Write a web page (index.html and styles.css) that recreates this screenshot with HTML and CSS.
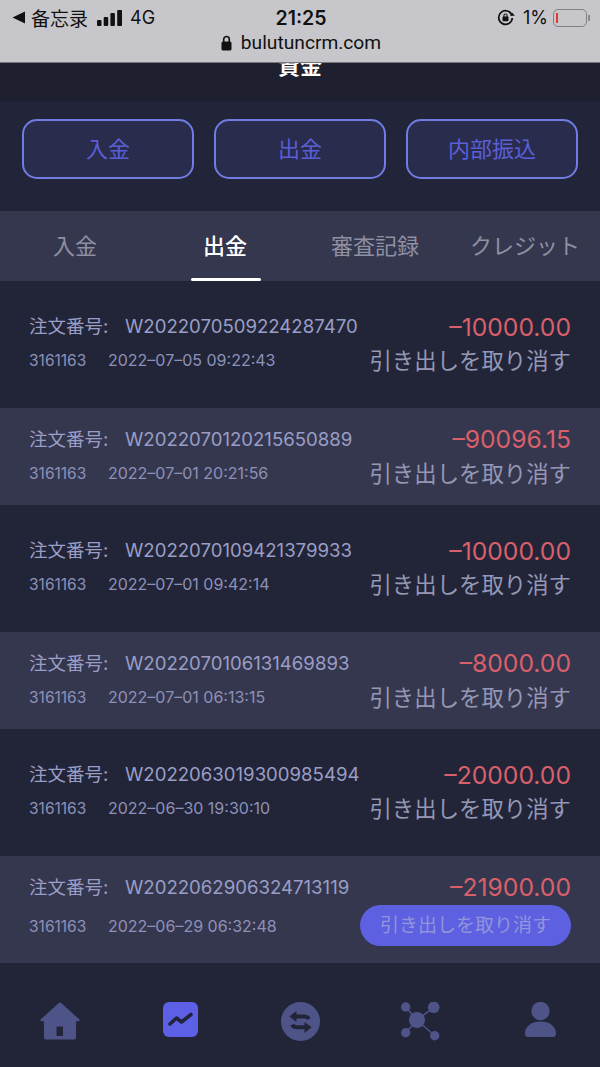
FILE: index.html

```html
<!DOCTYPE html>
<html lang="ja">
<head>
    <meta charset="UTF-8">
    <meta name="viewport" content="width=device-width, initial-scale=1.0">
    <title>資金</title>
    <link rel="stylesheet" href="styles.css">
</head>
<body>
    <div class="browser-bar">
        <div class="status">
            <div class="status-left">
                <svg class="back-arrow" width="13" height="13" viewBox="0 0 13 13"><path d="M13 0.500v12L0.500 6.500z" fill="#111"/></svg>
                <span class="app-name">备忘录</span>
                <svg class="signal" width="25" height="16" viewBox="0 0 25 16">
                    <rect x="0" y="10" width="4.500" height="6" rx="1"/>
                    <rect x="6.700" y="7" width="4.500" height="9" rx="1"/>
                    <rect x="13.400" y="3" width="4.500" height="13" rx="1"/>
                    <rect x="20.200" y="0" width="4.800" height="16" rx="1"/>
                </svg>
                <span class="network">4G</span>
            </div>
            <div class="clock">21:25</div>
            <div class="status-right">
                <svg class="rotate-lock" width="18" height="17" viewBox="0 0 18 17">
                    <path d="M15 6.500A6.800 6.800 0 1 0 15.300 9" fill="none" stroke="#111" stroke-width="1.700"/>
                    <path d="M13 6.800h4.800l-2.400-3z" fill="#111"/>
                    <rect x="5.500" y="7.600" width="6" height="4.600" rx="1" fill="#111"/>
                    <path d="M6.900 8V6.600a1.600 1.600 0 0 1 3.200 0V8" fill="none" stroke="#111" stroke-width="1.100"/>
                </svg>
                <span class="percent">1%</span>
                <div class="battery"><div class="battery-level"></div></div>
                <div class="battery-tip"></div>
            </div>
        </div>
        <div class="url">
            <svg width="11" height="16" viewBox="0 0 11 16">
                <rect x="0.500" y="6.500" width="10" height="9" rx="1.500" fill="#111"/>
                <path d="M2.700 7V4.300a2.800 2.800 0 0 1 5.600 0V7" fill="none" stroke="#111" stroke-width="1.600"/>
            </svg>
            <span>bulutuncrm.com</span>
        </div>
    </div>

    <header class="page-title">
        <h1>資金</h1>
    </header>

    <section class="actions">
        <button class="action-btn">入金</button>
        <button class="action-btn">出金</button>
        <button class="action-btn">内部振込</button>
    </section>

    <nav class="tabs">
        <a class="tab">入金</a>
        <a class="tab active">出金</a>
        <a class="tab">審査記録</a>
        <a class="tab">クレジット</a>
    </nav>

    <div class="orders">
        <div class="order">
            <div class="order-left">
                <div class="order-no"><span class="order-label">注文番号:</span>W2022070509224287470</div>
                <div class="order-meta"><span class="account">3161163</span>2022–07–05 09:22:43</div>
            </div>
            <div class="order-right">
                <div class="amount">–10000.00</div>
                <div class="cancel">引き出しを取り消す</div>
            </div>
        </div>
        <div class="order alt">
            <div class="order-left">
                <div class="order-no"><span class="order-label">注文番号:</span>W2022070120215650889</div>
                <div class="order-meta"><span class="account">3161163</span>2022–07–01 20:21:56</div>
            </div>
            <div class="order-right">
                <div class="amount">–90096.15</div>
                <div class="cancel">引き出しを取り消す</div>
            </div>
        </div>
        <div class="order">
            <div class="order-left">
                <div class="order-no"><span class="order-label">注文番号:</span>W2022070109421379933</div>
                <div class="order-meta"><span class="account">3161163</span>2022–07–01 09:42:14</div>
            </div>
            <div class="order-right">
                <div class="amount">–10000.00</div>
                <div class="cancel">引き出しを取り消す</div>
            </div>
        </div>
        <div class="order alt">
            <div class="order-left">
                <div class="order-no"><span class="order-label">注文番号:</span>W2022070106131469893</div>
                <div class="order-meta"><span class="account">3161163</span>2022–07–01 06:13:15</div>
            </div>
            <div class="order-right">
                <div class="amount">–8000.00</div>
                <div class="cancel">引き出しを取り消す</div>
            </div>
        </div>
        <div class="order">
            <div class="order-left">
                <div class="order-no"><span class="order-label">注文番号:</span>W2022063019300985494</div>
                <div class="order-meta"><span class="account">3161163</span>2022–06–30 19:30:10</div>
            </div>
            <div class="order-right">
                <div class="amount">–20000.00</div>
                <div class="cancel">引き出しを取り消す</div>
            </div>
        </div>
        <div class="order alt pressed">
            <div class="order-left">
                <div class="order-no"><span class="order-label">注文番号:</span>W2022062906324713119</div>
                <div class="order-meta"><span class="account">3161163</span>2022–06–29 06:32:48</div>
            </div>
            <div class="order-right">
                <div class="amount">–21900.00</div>
                <div class="cancel">引き出しを取り消す</div>
            </div>
        </div>
    </div>

    <footer class="bottom-nav">
        <a class="nav-item">
            <svg width="40" height="38" viewBox="0 0 40 38">
                <path d="M19 0.800a1.600 1.600 0 0 1 2 0L39.400 17.600c.7.700.3 1.600-.6 1.600H36V35a2.600 2.600 0 0 1-2.600 2.600H6.600A2.600 2.600 0 0 1 4 35V19.200H1.200c-.9 0-1.300-.9-.6-1.600z" fill="#4f5488"/>
                <rect x="16.500" y="24.500" width="6.500" height="9.500" fill="#222538"/>
            </svg>
        </a>
        <a class="nav-item">
            <svg width="35" height="35" viewBox="0 0 35 35">
                <rect width="35" height="35" rx="6" fill="#5d60e6"/>
                <path d="M7 22l6.500-6 5 4L28 12.500" fill="none" stroke="#222538" stroke-width="3.600" stroke-linecap="round" stroke-linejoin="round"/>
            </svg>
        </a>
        <a class="nav-item">
            <svg width="39" height="39" viewBox="0 0 39 39">
                <circle cx="19.500" cy="19.500" r="19.500" fill="#4f5488"/>
                <path d="M8.300 14.500L15.500 9v11z" fill="#222538"/>
                <path d="M14 14.500h9c2 0 4 .7 5 2.500" fill="none" stroke="#222538" stroke-width="4"/>
                <path d="M30.700 25.300L23.500 20v11z" fill="#222538"/>
                <path d="M25 25.300h-9c-2 0-4-.7-5-2.500" fill="none" stroke="#222538" stroke-width="4"/>
            </svg>
        </a>
        <a class="nav-item">
            <svg width="39" height="39" viewBox="0 0 39 39">
                <path d="M16 18L4.700 5M16 18L32.700 5.300M16 18L4.700 30.700M16 18L33.700 33.700" stroke="#4f5488" stroke-width="1.500"/>
                <circle cx="16" cy="18" r="8" fill="#4f5488"/>
                <circle cx="4.700" cy="5" r="4.700" fill="#4f5488"/>
                <circle cx="32.700" cy="5.300" r="5.800" fill="#4f5488"/>
                <circle cx="4.700" cy="30.700" r="4.700" fill="#4f5488"/>
                <circle cx="33.700" cy="33.700" r="4.700" fill="#4f5488"/>
            </svg>
        </a>
        <a class="nav-item">
            <svg width="31" height="35" viewBox="0 0 31 35">
                <circle cx="15.500" cy="9" r="9.200" fill="#4f5488"/>
                <path d="M0 31.500C0 24 7 19.500 15.500 19.500S31 24 31 31.500c0 2-1 3.500-3 3.500H3c-2 0-3-1.500-3-3.500z" fill="#4f5488"/>
            </svg>
        </a>
    </footer>
</body>
</html>
```

FILE: styles.css

```css
* {
    box-sizing: border-box;
}
body {
    margin: 0;
    width: 600px;
    height: 1067px;
    overflow: hidden;
    background-color: #222538;
    font-family: Inter, "Noto Sans CJK JP", sans-serif;
}

/* browser chrome */
.browser-bar {
    height: 63px;
    padding-top: 4px;
    background-color: #c7c7cb;
    border-bottom: 1px solid #77777c;
    color: #111;
}
.status {
    display: grid;
    grid-template-columns: 1fr auto 1fr;
    align-items: center;
    height: 25px;
    padding: 0 10px 0 12px;
}
.status-left, .status-right {
    display: flex;
    align-items: center;
}
.status-right {
    justify-content: flex-end;
}
.app-name {
    margin-left: 6px;
    font-family: "Noto Sans CJK SC", sans-serif;
    font-size: 19px;
}
.signal {
    margin-left: 9px;
    fill: #111;
}
.network {
    margin-left: 8px;
    font-size: 18px;
}
.clock {
    font-size: 19.5px;
    font-weight: 600;
}
.percent {
    margin-left: 8px;
    font-size: 18px;
}
.battery {
    width: 34px;
    height: 18px;
    margin-left: 5px;
    padding: 3px 2px;
    border: 1.5px solid #808085;
    border-radius: 5px;
}
.battery-level {
    width: 2px;
    height: 100%;
    background-color: #e0392f;
}
.battery-tip {
    width: 2px;
    height: 6px;
    margin-left: 1px;
    background-color: #8a8a8e;
}
.url {
    display: flex;
    align-items: center;
    justify-content: center;
    gap: 9px;
    height: 27px;
    padding-left: 2px;
    font-family: Roboto, sans-serif;
    font-size: 19.2px;
}

/* title, cut by the browser bar */
.page-title {
    height: 38px;
    overflow: hidden;
    background-color: #1e2030;
    text-align: center;
}
.page-title h1 {
    margin: -8px 0 0;
    color: #fff;
    font-size: 22px;
    font-weight: 700;
    line-height: 22px;
}

.actions {
    display: flex;
    gap: 20px;
    height: 110px;
    padding: 18px 22px 0;
    background-color: #22253a;
}
.action-btn {
    flex: 1;
    height: 60px;
    padding: 0 0 4px;
    background-color: #2a2c4e;
    border: 2px solid #717ce0;
    border-radius: 15px;
    color: #5a5fd8;
    font-family: inherit;
    font-size: 22px;
}

.tabs {
    display: flex;
    height: 70px;
    background-color: #35374f;
}
.tab {
    flex: 1;
    position: relative;
    color: #8f90a2;
    font-size: 22px;
    line-height: 70px;
    text-align: center;
    white-space: nowrap;
}
.tab.active {
    color: #fff;
    font-weight: 500;
}
.tab.active::after {
    content: "";
    position: absolute;
    left: 41px;
    right: 39px;
    bottom: 0;
    height: 3px;
    background-color: #fff;
    border-radius: 2px;
}

.order {
    display: flex;
    justify-content: space-between;
    height: 127px;
    padding: 30px 29px 0;
    background-color: #222538;
}
.order.alt {
    height: 97px;
    padding-top: 16px;
    background-color: #35374f;
}
.order.pressed {
    height: 107px;
}
.order-no {
    height: 30px;
    color: #9a9ec6;
    font-size: 18.6px;
    line-height: 30px;
    white-space: nowrap;
}
.order-label {
    display: inline-block;
    width: 96px;
    font-size: 18.5px;
}
.order-meta {
    margin-top: 4px;
    color: #8d91b8;
    font-size: 16px;
    line-height: 30px;
    white-space: nowrap;
}
.account {
    display: inline-block;
    width: 79px;
    font-size: 15.5px;
}
.order-right {
    text-align: right;
}
.amount {
    height: 30px;
    color: #d9606a;
    font-size: 24.7px;
    line-height: 32px;
}
.order.alt .amount {
    line-height: 30px;
}
.cancel {
    margin-top: 3px;
    color: #9597b5;
    font-size: 22.4px;
    line-height: 34px;
    white-space: nowrap;
}
.pressed .order-meta {
    margin-top: 6px;
    line-height: 36px;
}
.pressed .cancel {
    width: 211px;
    height: 41px;
    margin-top: 3px;
    background-color: #5d60e0;
    border-radius: 21px;
    color: #9295dc;
    font-size: 19px;
    line-height: 41px;
    text-align: center;
}

.bottom-nav {
    display: flex;
    align-items: flex-start;
    height: 104px;
    padding-top: 39px;
    background-color: #222538;
}
.nav-item {
    flex: 1;
    display: flex;
    justify-content: center;
}
```
